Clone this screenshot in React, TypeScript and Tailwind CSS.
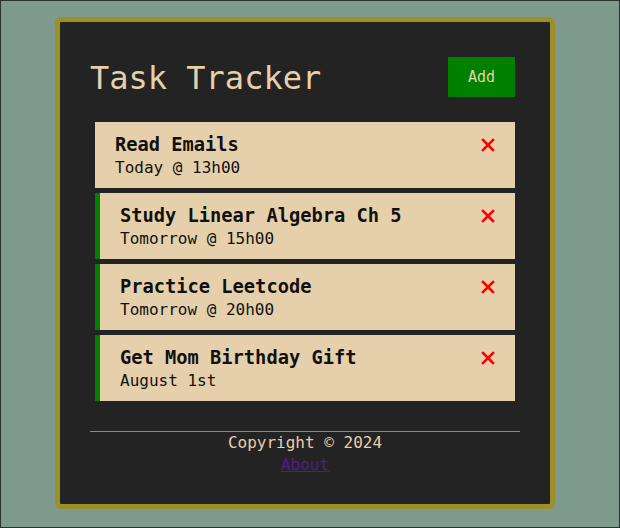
const tasks = [
  { id: 1, text: "Read Emails", day: "Today @ 13h00", reminder: false },
  { id: 2, text: "Study Linear Algebra Ch 5", day: "Tomorrow @ 15h00", reminder: true },
  { id: 3, text: "Practice Leetcode", day: "Tomorrow @ 20h00", reminder: true },
  { id: 4, text: "Get Mom Birthday Gift", day: "August 1st", reminder: true },
]

const Times = () => (
  <svg width="14" height="14" viewBox="0 0 14 14" className="shrink-0">
    <path d="M2 2 L12 12 M12 2 L2 12" stroke="#ff0000" strokeWidth="2.6" strokeLinecap="square" />
  </svg>
)

export default function App() {
  return (
    <div
      className="h-[528px] w-[620px] border border-[#27332e] bg-[#7e9a8c] pl-[54px] pt-[16px]"
      style={{ fontFamily: '"DejaVu Sans Mono", monospace' }}
    >
      <div className="flex h-[492px] w-[500px] flex-col rounded-[6px] border-[5px] border-[#9a9027] bg-[#232323] p-[30px]">
        {/* header */}
        <header className="mb-[20px] flex items-center justify-between">
          <h1 className="pt-[2px] text-[32px] leading-[38px] text-[#e6d0aa]">Task Tracker</h1>
          <button className="m-[5px] bg-[#008000] px-[20px] py-[10px] text-[15px] leading-[20px] text-[#e6d0aa]">
            Add
          </button>
        </header>

        {/* tasks */}
        <div className="flex flex-col gap-[5px] px-[5px]">
          {tasks.map((t) => (
            <div
              key={t.id}
              className={`bg-[#e6d0ab] px-[20px] pt-[11px] pb-[9px] text-[#111] ${t.reminder ? "border-l-[5px] border-[#008000]" : ""}`}
            >
              <div className="flex items-center justify-between">
                <h3 className="text-[18.72px] font-bold leading-[24px]">{t.text}</h3>
                <Times />
              </div>
              <p className="text-[16px] leading-[22px]">{t.day}</p>
            </div>
          ))}
        </div>

        {/* footer */}
        <footer className="mt-[30px] border-t border-[#8a8a8a] text-center text-[16px] leading-[22px]">
          <p className="text-[#e6d0aa]">Copyright © 2024</p>
          <a href="#" className="text-[#4f1f8c] underline">
            About
          </a>
        </footer>
      </div>
    </div>
  )
}
